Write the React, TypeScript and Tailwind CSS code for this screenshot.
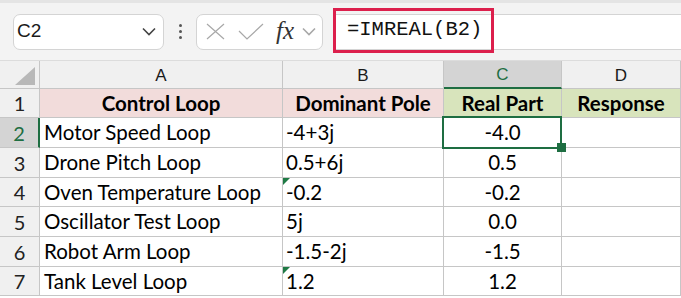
import React from 'react';

const ROWS = [
  { n: 2, a: 'Motor Speed Loop', b: '-4+3j', c: '-4.0', h: 'h-[30px]' },
  { n: 3, a: 'Drone Pitch Loop', b: '0.5+6j', c: '0.5', h: 'h-[30px]' },
  { n: 4, a: 'Oven Temperature Loop', b: '-0.2', c: '-0.2', h: 'h-[29px]', flag: true },
  { n: 5, a: 'Oscillator Test Loop', b: '5j', c: '0.0', h: 'h-[30px]' },
  { n: 6, a: 'Robot Arm Loop', b: '-1.5-2j', c: '-1.5', h: 'h-[30px]' },
  { n: 7, a: 'Tank Level Loop', b: '1.2', c: '1.2', h: 'h-[29px]', flag: true },
];

const cell = 'border-r border-b border-[#c6c6c6] flex items-center';
const calibri = { fontFamily: 'Lato, "Open Sans", sans-serif' };
const arial = { fontFamily: '"Liberation Sans", Arial, sans-serif' };

function Chevron({ color }: { color: string }) {
  return (
    <svg width="14" height="9" viewBox="0 0 14 9" fill="none">
      <path d="M1 1.5 L7 7.5 L13 1.5" stroke={color} strokeWidth="1.6" />
    </svg>
  );
}

function Toolbar() {
  return (
    <div className="relative h-[61px] bg-[#f3f3f3] border-t-[3px] border-[#e4e4e4] border-b border-b-[#dcdcdc] flex items-center pl-[13px]">
      {/* name box */}
      <div className="w-[151px] h-[36px] bg-white border border-[#d4d4d4] rounded-[7px] flex items-center justify-between pl-[3px] pr-[7px]">
        <span className="text-[19px] text-[#1a1a1a]" style={arial}>C2</span>
        <Chevron color="#444" />
      </div>
      {/* dots */}
      <div className="w-[32px] flex flex-col items-center gap-[3px]">
        <span className="w-[3px] h-[3px] rounded-full bg-[#555]" />
        <span className="w-[3px] h-[3px] rounded-full bg-[#555]" />
        <span className="w-[3px] h-[3px] rounded-full bg-[#555]" />
      </div>
      {/* fx box */}
      <div className="w-[127px] h-[36px] bg-white border border-[#d4d4d4] rounded-[7px] flex items-center pl-[9px] pr-[4px]">
        <svg width="19" height="17" viewBox="0 0 19 17" fill="none">
          <path d="M1 1 L18 16 M18 1 L1 16" stroke="#a8a8a8" strokeWidth="1.2" />
        </svg>
        <svg width="26" height="17" viewBox="0 0 26 17" fill="none" className="ml-[13px]">
          <path d="M1 8 L9 16 L25 1" stroke="#a8a8a8" strokeWidth="1.2" />
        </svg>
        <span className="ml-[12px] text-[25px] italic text-[#333] leading-none pb-[2px]" style={{ fontFamily: '"Liberation Serif", "DejaVu Serif", serif' }}>fx</span>
        <span className="ml-[8px]"><Chevron color="#a8a8a8" /></span>
      </div>
      {/* formula bar */}
      <div className="ml-[10px] flex-1 h-[36px] bg-white border-y border-[#d4d4d4] relative">
        <div className="absolute left-0 top-[-7px] w-[161px] h-[45px] border-[3px] border-[#dc1f4c] flex items-center pl-[11px]">
          <span className="text-[20.5px] text-[#111]" style={{ fontFamily: '"Liberation Mono", monospace' }}>=IMREAL(B2)</span>
        </div>
      </div>
    </div>
  );
}

export default function App() {
  return (
    <div className="w-[681px] h-[298px] bg-white overflow-hidden">
      <Toolbar />
      <div className="grid grid-cols-[40px_243px_161px_118px_119px]" style={calibri}>
        {/* column header row */}
        <div className={`${cell} h-[28px] bg-[#f0f0f0] justify-end items-end pr-[4px] pb-[3px]`}>
          <svg width="20" height="18" viewBox="0 0 20 18">
            <polygon points="20,0 20,18 0,18" fill="#b8b8b8" />
          </svg>
        </div>
        {['A', 'B'].map((l) => (
          <div key={l} className={`${cell} h-[28px] bg-[#f0f0f0] justify-center pt-[2px] text-[17px] text-[#1a1a1a]`} style={arial}>{l}</div>
        ))}
        <div className="h-[28px] bg-[#d4d4d4] border-r border-[#c6c6c6] border-b-2 border-b-[#1e6e42] flex items-center justify-center pt-[2px] text-[17px] text-[#1e6e42]" style={arial}>C</div>
        <div className={`${cell} h-[28px] bg-[#f0f0f0] justify-center pt-[2px] text-[17px] text-[#1a1a1a]`} style={arial}>D</div>

        {/* row 1 */}
        <div className={`${cell} h-[29px] bg-[#f0f0f0] justify-center text-[20px] text-[#222]`}>1</div>
        <div className={`${cell} h-[29px] bg-[#f2dcdb] justify-center text-[20.5px] font-bold text-black`}>Control Loop</div>
        <div className={`${cell} h-[29px] bg-[#f2dcdb] justify-center text-[20.5px] font-bold text-black`}>Dominant Pole</div>
        <div className={`${cell} h-[29px] bg-[#d8e4bc] justify-center text-[20.5px] font-bold text-black`}>Real Part</div>
        <div className={`${cell} h-[29px] bg-[#d8e4bc] justify-center text-[20.5px] font-bold text-black`}>Response</div>

        {ROWS.map((r) => {
          const sel = r.n === 2;
          return (
            <React.Fragment key={r.n}>
              <div
                className={`${r.h} border-b border-[#c6c6c6] flex items-center justify-center text-[20px] ${
                  sel ? 'bg-[#d4d4d4] text-[#1e6e42] border-r-2 border-r-[#1e6e42]' : 'bg-[#f0f0f0] text-[#222] border-r border-r-[#c6c6c6]'
                }`}
              >
                {r.n}
              </div>
              <div className={`${cell} ${r.h} pl-[4px] text-[20.5px] text-black`}>{r.a}</div>
              <div className={`${cell} ${r.h} pl-[3px] text-[20.5px] text-black relative`}>
                {r.flag && (
                  <span className="absolute left-0 top-0 w-0 h-0 border-t-[7px] border-t-[#1e7a45] border-r-[7px] border-r-transparent" />
                )}
                {r.b}
              </div>
              <div className={`${cell} ${r.h} justify-center text-[20.5px] text-black relative`}>
                {sel && (
                  <>
                    <span className="absolute z-10 left-[-2px] top-[-2px] right-[-1px] bottom-[-2px] border-2 border-[#1e6e42]" />
                    <span className="absolute z-20 right-[-5px] bottom-[-5px] w-[9px] h-[9px] bg-[#1e6e42]" />
                  </>
                )}
                {r.c}
              </div>
              <div className={`${cell} ${r.h}`} />
            </React.Fragment>
          );
        })}
      </div>
    </div>
  );
}
